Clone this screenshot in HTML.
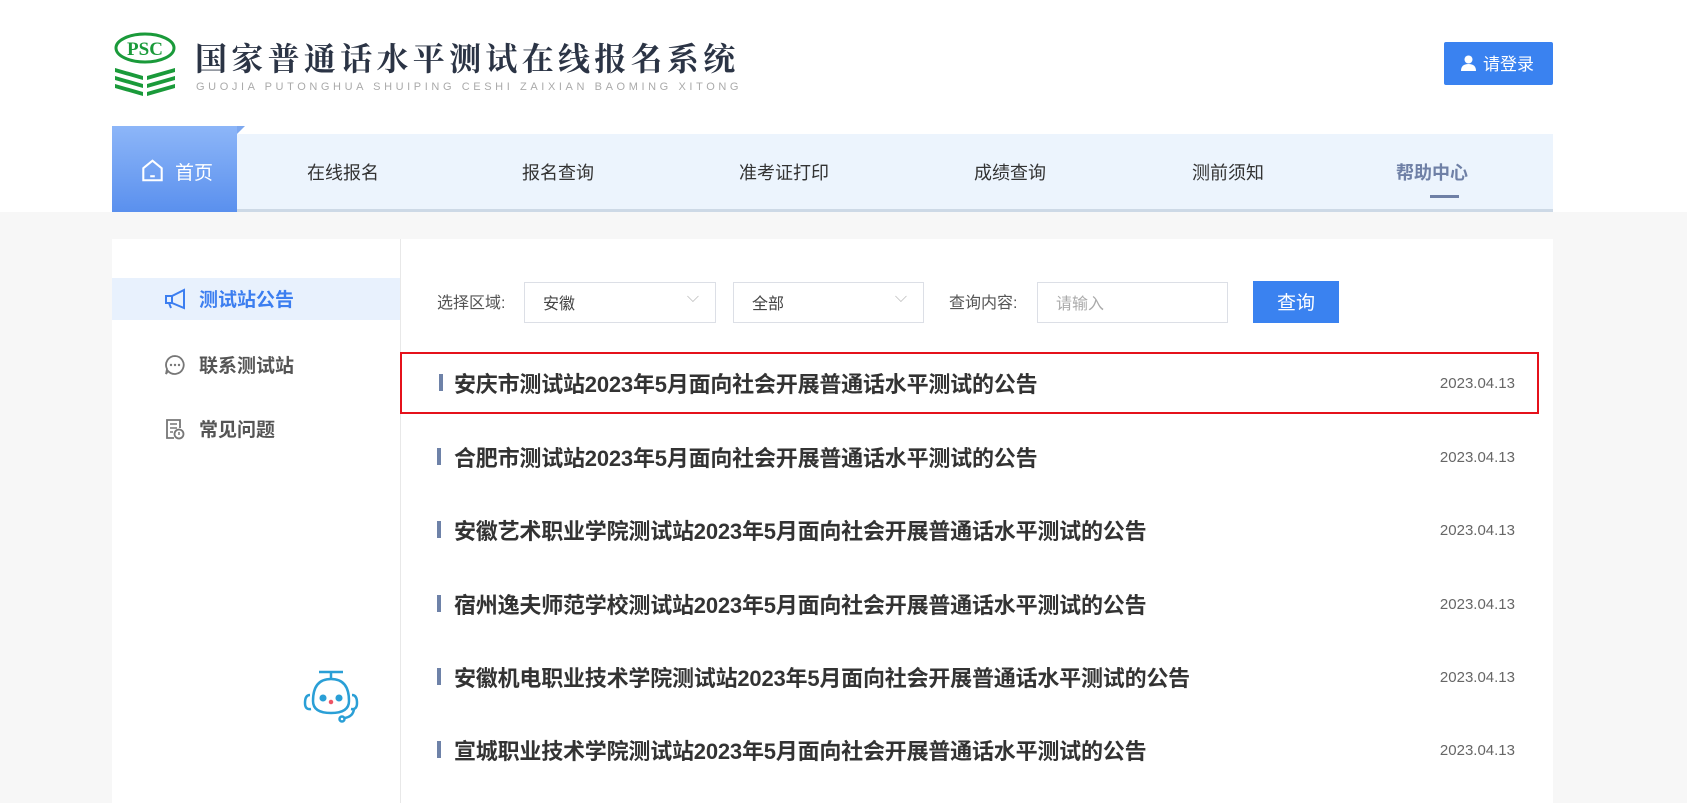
<!DOCTYPE html>
<html><head><meta charset="utf-8"><style>
*{margin:0;padding:0;box-sizing:border-box}
body{width:1687px;height:803px;overflow:hidden;background:#f7f7f7;font-family:"Liberation Sans","Noto Sans CJK SC",sans-serif;position:relative}
.top{position:absolute;left:0;top:0;width:1687px;height:212px;background:#fff}
.abs{position:absolute}
.nav{position:absolute;left:112px;top:134px;width:1441px;height:78px;background:#ecf4fd;border-bottom:3px solid #cdd9e6}
.home{position:absolute;left:112px;top:126px;width:125px;height:86px;background:linear-gradient(#8db6f8,#5a90ee);color:#fff;font-size:19px}
.ni{position:absolute;top:159px;font-size:18px;color:#333;transform:translateX(-50%);white-space:nowrap}
.card{position:absolute;left:112px;top:239px;width:1441px;height:564px;background:#fff}
.side{position:absolute;left:400px;top:239px;width:1px;height:564px;background:#e8e8e8}
.si{position:absolute;left:112px;width:288px;height:42px;font-size:19px;font-weight:bold;color:#555}
.si span{position:absolute;left:87px;top:7px}
.sel{position:absolute;top:282px;height:41px;border:1px solid #dcdfe6;background:#fff;font-size:16px;color:#444;padding:7px 18px}
.lab{position:absolute;top:289px;font-size:16px;color:#555}
.row{position:absolute;left:400px;width:1139px;height:62px}
.row .b{position:absolute;left:37px;top:22px;width:4px;height:17px;background:#6e82a8}
.row .t{position:absolute;left:54px;top:15px;font-size:22px;font-weight:bold;color:#333;white-space:nowrap;letter-spacing:-0.2px}
.row .d{position:absolute;right:24px;top:23px;font-size:15px;color:#666}
</style></head><body>
<div class="top"></div>
<svg class="abs" style="left:112px;top:32px" width="66" height="64" viewBox="0 0 66 64">
<ellipse cx="33" cy="16" rx="29" ry="14" fill="none" stroke="#1a9a3a" stroke-width="3"/>
<text x="33" y="23" font-family="Liberation Serif" font-weight="bold" font-size="19" fill="#1a9a3a" text-anchor="middle">PSC</text>
<g fill="#1a9a3a"><path d="M3 36 L31 44 L31 48 L3 40Z"/><path d="M63 36 L35 44 L35 48 L63 40Z"/><path d="M3 44 L31 52 L31 56 L3 48Z"/><path d="M63 44 L35 52 L35 56 L63 48Z"/><path d="M3 52 L31 60 L31 64 L3 56Z"/><path d="M63 52 L35 60 L35 64 L63 56Z"/></g></svg>
<div class="abs" style="left:195px;top:34px;font-size:32px;color:#2b3445;letter-spacing:4.3px;font-family:'Noto Serif CJK SC','Noto Sans CJK SC',serif;font-weight:bold;white-space:nowrap">国家普通话水平测试在线报名系统</div>
<div class="abs" style="left:196px;top:81px;font-size:11px;color:#aaa;letter-spacing:3.6px;white-space:nowrap">GUOJIA PUTONGHUA SHUIPING CESHI ZAIXIAN BAOMING XITONG</div>
<div class="abs" style="left:1444px;top:42px;width:109px;height:43px;background:#3a82f0;border-radius:2px;color:#fff;font-size:17px;padding:8px 0 0 39px">请登录</div>
<svg class="abs" style="left:1461px;top:55px" width="15" height="16" viewBox="0 0 15 16"><circle cx="7.5" cy="4.5" r="4" fill="#fff"/><path d="M0 16 Q0 9 7.5 9 Q15 9 15 16Z" fill="#fff"/></svg>
<div class="nav"></div>
<div class="home"><svg class="abs" style="left:29px;top:33px" width="23" height="23" viewBox="0 0 20 20"><path d="M2 8 L10 1.5 L18 8 V18.5 H2Z" fill="none" stroke="#fff" stroke-width="1.8"/><path d="M8 15h4" stroke="#fff" stroke-width="1.8"/></svg><span class="abs" style="left:63px;top:32px">首页</span></div>
<div class="abs" style="left:237px;top:126px;width:0;height:0;border-left:8px solid #7da8ef;border-bottom:8px solid transparent"></div>
<div class="ni" style="left:343px">在线报名</div>
<div class="ni" style="left:558px">报名查询</div>
<div class="ni" style="left:784px">准考证打印</div>
<div class="ni" style="left:1010px">成绩查询</div>
<div class="ni" style="left:1228px">测前须知</div>
<div class="ni" style="left:1432px;font-weight:bold;color:#6f80a6">帮助中心</div>
<div class="abs" style="left:1430px;top:195px;width:29px;height:3px;background:#6f80a6"></div>
<div class="card"></div>
<div class="side"></div>
<div class="si" style="top:278px;background:#e8f1fd;color:#3c7ef0"><svg class="abs" style="left:52px;top:10px" width="22" height="22" viewBox="0 0 22 22"><path d="M20 2 V20 L8 15 H2 V8 H8Z M8 8 V15 M5 15 L7 20" fill="none" stroke="#3c7ef0" stroke-width="2"/></svg><span>测试站公告</span></div>
<div class="si" style="top:344px"><svg class="abs" style="left:52px;top:10px" width="22" height="22" viewBox="0 0 22 22"><path d="M11 2 A9 9 0 1 1 4 17 L2 20 L3 15 A9 9 0 0 1 11 2Z" fill="none" stroke="#777" stroke-width="1.8"/><circle cx="7" cy="11" r="1.2" fill="#777"/><circle cx="11" cy="11" r="1.2" fill="#777"/><circle cx="15" cy="11" r="1.2" fill="#777"/></svg><span>联系测试站</span></div>
<div class="si" style="top:408px"><svg class="abs" style="left:52px;top:10px" width="22" height="22" viewBox="0 0 22 22"><path d="M10 20 H3 V2 H16 V10" fill="none" stroke="#777" stroke-width="1.8"/><path d="M6 6h7M6 10h7M6 14h3" stroke="#777" stroke-width="1.5"/><circle cx="15" cy="16" r="4.5" fill="none" stroke="#777" stroke-width="1.8"/><path d="M15 14v3" stroke="#777" stroke-width="1.5"/></svg><span>常见问题</span></div>
<svg class="abs" style="left:300px;top:665px" width="62" height="60" viewBox="0 0 62 60" fill="none" stroke="#2a9fd6" stroke-width="2.5"><path d="M19 7 H43 M31 7 V13"/><path d="M13 36 Q13 14 31 14 Q49 14 49 36 Q49 48 31 48 Q13 48 13 36Z"/><path d="M10 30 Q5 30 5 38 Q5 45 11 44 M52 30 Q57 30 57 38 Q57 45 51 44"/><path d="M54 44 Q53 52 44 53"/><circle cx="42" cy="54" r="2.5"/><circle cx="23" cy="33" r="2.3" fill="#2a9fd6"/><circle cx="39" cy="33" r="2.3" fill="#2a9fd6"/><circle cx="31" cy="37" r="1" stroke="#e56" fill="#e56"/></svg>
<div class="lab" style="left:437px">选择区域:</div>
<div class="sel" style="left:524px;width:192px">安徽<span class="abs" style="right:16px;top:6px;color:#bbb">⌵</span></div>
<div class="sel" style="left:733px;width:191px">全部<span class="abs" style="right:16px;top:6px;color:#bbb">⌵</span></div>
<div class="lab" style="left:949px">查询内容:</div>
<div class="sel" style="left:1037px;width:191px;color:#aaa">请输入</div>
<div class="abs" style="left:1253px;top:281px;width:86px;height:42px;background:#3a82f0;color:#fff;font-size:19px;text-align:center;padding-top:7px">查询</div>
<div class="row" style="top:352px;border:2px solid #e5111b"><div class="b" style="top:20px"></div><div class="t" style="left:52px;top:13px">安庆市测试站2023年5月面向社会开展普通话水平测试的公告</div><div class="d" style="right:22px;top:21px">2023.04.13</div></div>
<div class="row" style="top:426px"><div class="b"></div><div class="t">合肥市测试站2023年5月面向社会开展普通话水平测试的公告</div><div class="d">2023.04.13</div></div>
<div class="row" style="top:499px"><div class="b"></div><div class="t">安徽艺术职业学院测试站2023年5月面向社会开展普通话水平测试的公告</div><div class="d">2023.04.13</div></div>
<div class="row" style="top:573px"><div class="b"></div><div class="t">宿州逸夫师范学校测试站2023年5月面向社会开展普通话水平测试的公告</div><div class="d">2023.04.13</div></div>
<div class="row" style="top:646px"><div class="b"></div><div class="t">安徽机电职业技术学院测试站2023年5月面向社会开展普通话水平测试的公告</div><div class="d">2023.04.13</div></div>
<div class="row" style="top:719px"><div class="b"></div><div class="t">宣城职业技术学院测试站2023年5月面向社会开展普通话水平测试的公告</div><div class="d">2023.04.13</div></div>
</body></html>
